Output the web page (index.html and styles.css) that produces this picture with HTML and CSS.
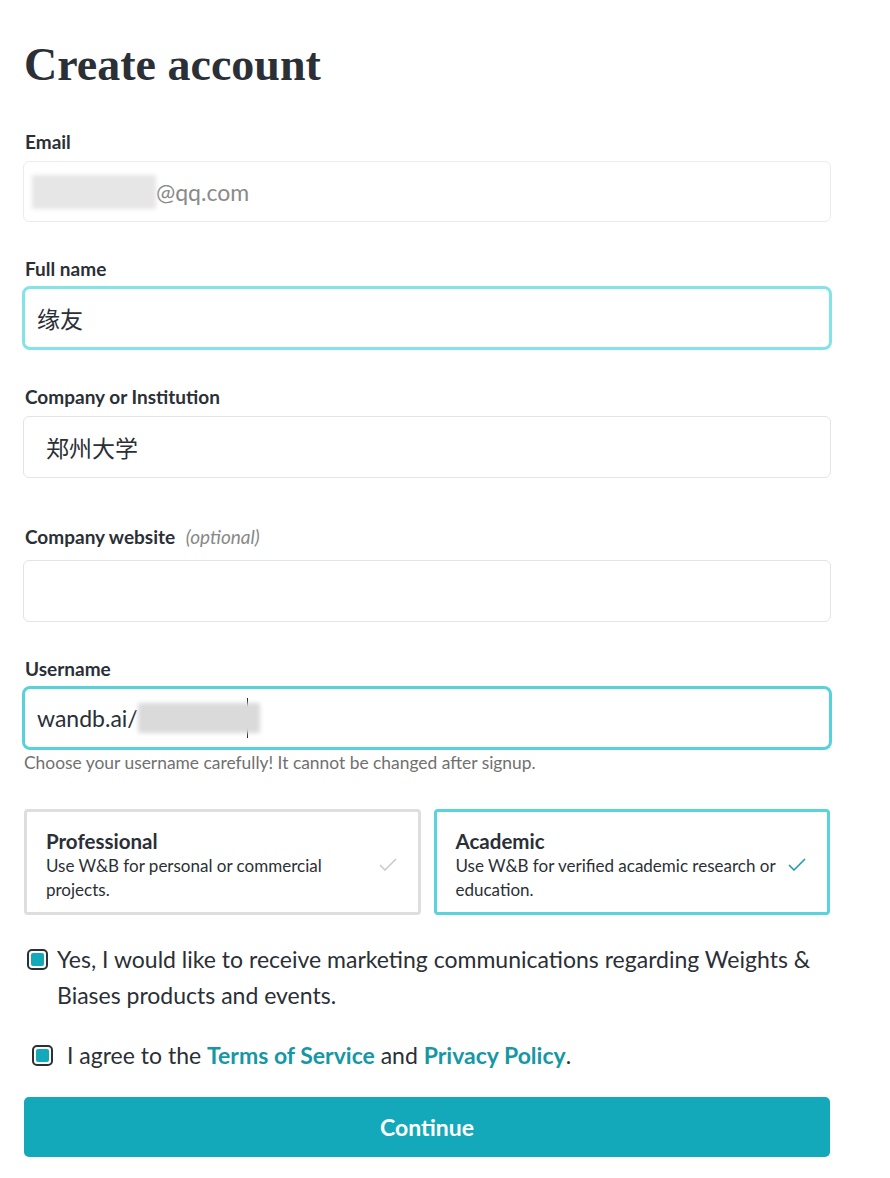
FILE: index.html
```html
<!DOCTYPE html>
<html>
<head>
  <meta charset="utf-8">
  <title>Create account</title>
  <link rel="stylesheet" href="styles.css">
</head>
<body>
  <div class="signup">
    <h1>Create account</h1>

    <!-- EMAIL -->
    <div class="field">
      <label>Email</label>
      <div class="input readonly">
        <span class="redacted email-redacted"></span><span class="muted">@qq.com</span>
      </div>
    </div>

    <!-- FULL NAME -->
    <div class="field">
      <label>Full name</label>
      <input class="input focused light" type="text" value="缘友">
    </div>

    <!-- COMPANY -->
    <div class="field">
      <label>Company or Institution</label>
      <input class="input wide-pad" type="text" value="郑州大学">
    </div>

    <!-- WEBSITE -->
    <div class="field website">
      <label>Company website <em class="optional">(optional)</em></label>
      <input class="input" type="text" value="">
    </div>

    <!-- USERNAME -->
    <div class="field username">
      <label>Username</label>
      <div class="input focused">
        <span>wandb.ai/</span><span class="redacted user-redacted"></span><span class="caret"></span>
      </div>
      <p class="hint">Choose your username carefully! It cannot be changed after signup.</p>
    </div>

    <!-- ACCOUNT TYPE -->
    <div class="plans">
      <div class="plan">
        <div class="plan-text">
          <h3>Professional</h3>
          <p>Use W&amp;B for personal or commercial projects.</p>
        </div>
        <svg class="check" width="18" height="13" viewBox="0 0 18 13"><path d="M1 7l5 5L17 1" fill="none" stroke="#c9c9c9" stroke-width="1.5"/></svg>
      </div>
      <div class="plan selected">
        <div class="plan-text">
          <h3>Academic</h3>
          <p>Use W&amp;B for verified academic research or education.</p>
        </div>
        <svg class="check" width="18" height="13" viewBox="0 0 18 13"><path d="M1 7l5 5L17 1" fill="none" stroke="#1a9aa8" stroke-width="1.5"/></svg>
      </div>
    </div>

    <!-- CHECKBOXES -->
    <div class="check-row marketing">
      <span class="box"><span class="tick"></span></span>
      <span>Yes, I would like to receive marketing communications regarding Weights &amp; Biases products and events.</span>
    </div>
    <div class="check-row terms">
      <span class="box"><span class="tick"></span></span>
      <span>I agree to the <a href="#">Terms of Service</a> and <a href="#">Privacy Policy</a>.</span>
    </div>

    <button class="continue">Continue</button>
  </div>
</body>
</html>
```

FILE: styles.css
```css
body {
  margin: 0;
  background: #fff;
  color: #2b2f36;
  font-family: Lato, "Noto Sans CJK SC", sans-serif;
}
.signup { width: 806px; padding: 37px 0 0 24px; }

h1 {
  margin: 0 0 37px 0;
  font-family: "Liberation Serif", serif;
  font-size: 46px;
  line-height: 56px;
  font-weight: bold;
  color: #2b2f36;
}

/* fields */
.field { margin-bottom: 35px; }
.field label {
  display: block;
  font-size: 19px;
  line-height: 24px;
  font-weight: bold;
  margin-bottom: 7px;
  padding-left: 1px;
}
.optional { font-weight: normal; color: #888; margin-left: 6px; }
.input {
  display: flex;
  align-items: center;
  box-sizing: border-box;
  width: 808px;
  height: 62px;
  margin-left: -1px;
  padding: 0 8px;
  border: 1px solid #e4e4e4;
  border-radius: 6px;
  background: #fff;
  font-family: Lato, "Noto Sans CJK SC", sans-serif;
  font-size: 23px;
  color: #2b2f36;
  outline: none;
}
.input.readonly { height: 61px; border-color: #ececec; }
.input.wide-pad { padding-left: 22px; }
.input.focused {
  height: 64px;
  margin-left: -2px;
  width: 810px;
  padding-left: 12px;
  border: 3px solid #58d2da;
  border-radius: 8px;
}
.input.focused.light { border-color: #82e3e8; }
.field label + .input.focused { margin-top: -2px; }
.muted { color: #8a8a8a; }
.redacted { display: inline-block; background: #e6e6e6; filter: blur(2px); }
.email-redacted { width: 124px; height: 34px; }
.user-redacted { width: 122px; height: 30px; background: #dadada; }
.caret { display: inline-block; width: 1px; height: 40px; background: #222; margin-left: -13px; }

.website { margin-top: 47px; }
.website label { margin-bottom: 11px; }
.username { margin-bottom: 0; }
.hint { margin: 2px 0 0 0; font-size: 17.4px; line-height: 22px; color: #707070; }

/* plan cards */
.plans {
  display: grid;
  grid-template-columns: 1fr 1fr;
  gap: 13px;
  margin-top: 35px;
}
.plan {
  display: flex;
  align-items: center;
  gap: 12px;
  height: 106px;
  box-sizing: border-box;
  padding: 6px 21px 0 19px;
  border: 3px solid #dedede;
  border-radius: 4px;
}
.plan.selected { border-color: #5ad4dc; }
.plan-text { flex: 1; }
.plan h3 { margin: 0; font-size: 20.5px; line-height: 26px; font-weight: bold; }
.plan p { margin: 0; font-size: 17px; line-height: 24px; }
.check { flex: none; margin-top: -2px; }

/* checkboxes */
.check-row {
  display: flex;
  align-items: flex-start;
  font-size: 23px;
  line-height: 36px;
}
.box {
  flex: none;
  box-sizing: border-box;
  width: 21px;
  height: 21px;
  margin-top: 8px;
  border: 2px solid #2b2f36;
  border-radius: 5px;
  display: flex;
  align-items: center;
  justify-content: center;
}
.tick { width: 13px; height: 13px; border-radius: 2px; background: #14a9ba; }
.marketing { margin: 26px 0 0 3px; }
.marketing .box { margin-right: 9px; }
.terms { margin: 24px 0 0 8px; }
.terms .box { margin-right: 14px; }
.terms a { color: #1597a6; font-weight: bold; text-decoration: none; }

.continue {
  display: block;
  width: 806px;
  height: 60px;
  margin-top: 24px;
  border: none;
  border-radius: 5px;
  background: #14a9ba;
  color: #fff;
  font-family: Lato, sans-serif;
  font-size: 23px;
  font-weight: bold;
  cursor: pointer;
}
```
